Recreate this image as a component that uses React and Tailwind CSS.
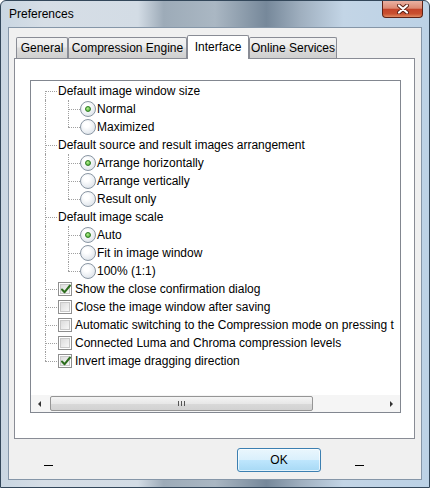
import React from 'react'

const rows = [
  { lvl: 1, text: 'Default image window size' },
  { lvl: 2, radio: true, on: true, text: 'Normal' },
  { lvl: 2, radio: true, text: 'Maximized', last: true },
  { lvl: 1, text: 'Default source and result images arrangement' },
  { lvl: 2, radio: true, on: true, text: 'Arrange horizontally' },
  { lvl: 2, radio: true, text: 'Arrange vertically' },
  { lvl: 2, radio: true, text: 'Result only', last: true },
  { lvl: 1, text: 'Default image scale' },
  { lvl: 2, radio: true, on: true, text: 'Auto' },
  { lvl: 2, radio: true, text: 'Fit in image window' },
  { lvl: 2, radio: true, text: '100% (1:1)', last: true },
  { lvl: 1, check: true, on: true, text: 'Show the close confirmation dialog' },
  { lvl: 1, check: true, text: 'Close the image window after saving' },
  { lvl: 1, check: true, text: 'Automatic switching to the Compression mode on pressing t' },
  { lvl: 1, check: true, text: 'Connected Luma and Chroma compression levels' },
  { lvl: 1, check: true, on: true, text: 'Invert image dragging direction' },
]

const tabs = [
  { label: 'General', w: 'w-[52px]' },
  { label: 'Compression Engine', w: 'w-[119px]' },
  { label: 'Interface', w: 'w-[62px]', active: true },
  { label: 'Online Services', w: 'w-[88px]' },
]

// dotted tree connector cell
function Dots({ w, v, h }) {
  return (
    <span className={`relative shrink-0 h-[18px] ${w}`}>
      {v === 'full' && <span className="absolute left-0 top-0 h-[18px] border-l border-dotted border-[#a0a0a0]" />}
      {v === 'top' && <span className="absolute left-0 top-0 h-[9px] border-l border-dotted border-[#a0a0a0]" />}
      {v === 'bottom' && <span className="absolute left-0 top-[9px] h-[9px] border-l border-dotted border-[#a0a0a0]" />}
      {h && <span className="absolute left-0 right-0 top-[9px] border-t border-dotted border-[#a0a0a0]" />}
    </span>
  )
}

function Radio({ on }) {
  return (
    <span className="shrink-0 w-[16px] h-[16px] rounded-full border border-[#8a96a3] bg-[radial-gradient(circle_at_40%_35%,#ffffff_20%,#d3dbe4_100%)] flex items-center justify-center">
      {on && <span className="w-[6px] h-[6px] rounded-full border border-[#2a7a1f] bg-[radial-gradient(circle_at_40%_35%,#b4f08e,#3fa32a)]" />}
    </span>
  )
}

function Check({ on }) {
  return (
    <span className="shrink-0 ml-[1px] w-[14px] h-[14px] border border-[#8f8f8f] bg-white p-[1px] flex">
      <span className="relative flex-1 border border-[#c9c9c9] bg-[linear-gradient(135deg,#dcdcdc,#f7f7f7)]">
        {on && (
          <svg className="absolute -left-[1px] -top-[2px]" width="12" height="12" viewBox="0 0 12 12">
            <path d="M2 6.5 L4.6 9.2 L10 2.5" fill="none" stroke="#2d6e1e" strokeWidth="2" strokeLinecap="round" strokeLinejoin="round" />
          </svg>
        )}
      </span>
    </span>
  )
}

function Arrow({ dir }) {
  return (
    <span className="w-[17px] h-[17px] shrink-0 flex items-center justify-center">
      {dir === 'left'
        ? <span className="w-0 h-0 border-y-[3px] border-y-transparent border-r-[3px] border-r-[#333]" />
        : <span className="w-0 h-0 border-y-[3px] border-y-transparent border-l-[3px] border-l-[#333]" />}
    </span>
  )
}

export default function App() {
  return (
    <div className="w-[430px] h-[488px] overflow-hidden flex flex-col border border-[#33475a] rounded-t-[6px] font-['Liberation_Sans',Arial,sans-serif] text-[12px] text-black bg-[linear-gradient(90deg,#c9d6e2_0%,#d6dee6_10%,#d3dce5_32%,#9dabb8_38%,#aab7c3_50%,#76889a_62%,#9fafbf_70%,#c3d5e6_80%,#bcd2e6_100%)]">
      {/* title bar */}
      <div className="h-[26px] shrink-0 relative flex items-center pl-[8px] pb-[1px]">
        <span>Preferences</span>
        <div className="absolute top-0 right-[6px] w-[41px] h-[17px] rounded-b-[4px] border border-t-0 border-[#5e2216] bg-[linear-gradient(180deg,#eab1a2_0%,#dd8a74_45%,#c4442a_52%,#c9502f_80%,#e08a62_100%)] flex items-center justify-center">
          <svg width="12" height="10" viewBox="0 0 12 10">
            <path d="M2 1.5 L10 8.5 M10 1.5 L2 8.5" stroke="#5a2014" strokeWidth="4" strokeLinecap="round" />
            <path d="M2 1.5 L10 8.5 M10 1.5 L2 8.5" stroke="#ffffff" strokeWidth="2.2" strokeLinecap="round" />
          </svg>
        </div>
      </div>

      {/* client area */}
      <div className="flex-1 mx-[7px] mb-[7px] border border-[#8596a8] bg-[#f0f0f0] flex flex-col pt-[7px] pl-[5px]">
        {/* tabs */}
        <div className="flex items-end h-[24px] -mb-px relative z-10 pl-[2px]">
          {tabs.map((t) =>
            t.active ? (
              <div key={t.label} className={`${t.w} h-[24px] border border-b-0 border-[#898c95] rounded-t-[2px] bg-white flex items-center justify-center pb-[2px]`}>
                {t.label}
              </div>
            ) : (
              <div key={t.label} className={`${t.w} h-[21px] mb-px border border-b-0 border-[#898c95] rounded-t-[2px] bg-[linear-gradient(180deg,#f3f3f3_0%,#ebebeb_45%,#dddddd_50%,#cfcfcf_100%)] flex items-center justify-center`}>
                {t.label}
              </div>
            )
          )}
        </div>

        {/* tab panel */}
        <div className="w-[401px] h-[381px] border border-[#898c95] bg-white">
          <div className="ml-[15px] mt-[21px] w-[371px] h-[333px] border border-[#828790] flex flex-col">
            <div className="flex-1 overflow-hidden pt-px">
              {rows.map((r, i) => {
                const rootV = i === 0 ? 'bottom' : i === rows.length - 1 ? 'top' : 'full'
                return (
                  <div key={i} className="h-[18px] flex items-center pl-[14px] whitespace-nowrap">
                    <Dots w="w-[12px]" v={rootV} h={r.lvl === 1} />
                    {r.lvl === 2 && <span className="w-[11px] shrink-0" />}
                    {r.lvl === 2 && <Dots w="w-[12px]" v={r.last ? 'top' : 'full'} h />}
                    {r.radio && <Radio on={r.on} />}
                    {r.check && <Check on={r.on} />}
                    <span className={r.check ? 'ml-[3px]' : 'ml-[1px]'}>{r.text}</span>
                  </div>
                )
              })}
            </div>

            {/* horizontal scrollbar */}
            <div className="h-[17px] shrink-0 flex items-center bg-[#f5f5f5]">
              <Arrow dir="left" />
              <div className="ml-[2px] w-[263px] h-[15px] rounded-[2px] border border-[#959595] bg-[linear-gradient(180deg,#f4f4f4_0%,#e8e8e8_50%,#d9d9d9_51%,#d2d2d2_100%)] flex items-center justify-center gap-[2px]">
                <span className="w-px h-[5px] bg-[#555]" />
                <span className="w-px h-[5px] bg-[#555]" />
                <span className="w-px h-[5px] bg-[#555]" />
              </div>
              <div className="flex-1" />
              <Arrow dir="right" />
            </div>
          </div>
        </div>

        {/* footer */}
        <div className="flex items-start pl-[30px] pt-[9px]">
          <span className="w-[9px] h-px bg-black mt-[17px]" />
          <button className="ml-[184px] w-[84px] h-[24px] rounded-[3px] border border-[#3c7fb1] bg-[linear-gradient(180deg,#eaf6fd_0%,#d9f0fc_50%,#bee6fd_51%,#a7d9f5_100%)] shadow-[inset_0_0_0_1px_#ffffffaa] flex items-center justify-center">
            OK
          </button>
          <span className="ml-[34px] w-[9px] h-px bg-black mt-[17px]" />
        </div>
      </div>
    </div>
  )
}
